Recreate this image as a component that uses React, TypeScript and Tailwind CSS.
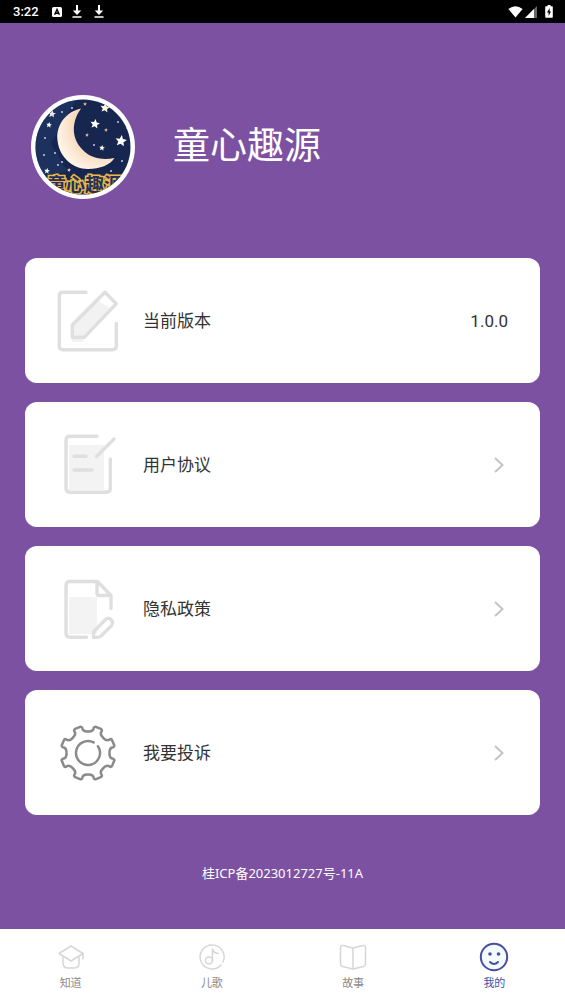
import type { ReactNode } from "react";

const FONT = "font-[Roboto,'Noto_Sans_CJK_SC',sans-serif]";

function StatusBar() {
  return (
    <header className="flex h-[23px] items-center justify-between bg-black pl-[13px] pr-3 text-white">
      <div className="flex items-center gap-2">
        <span className="w-[31px] text-[13px] leading-4 font-medium">3:22</span>
        <svg className="h-[10px] w-[10px]" viewBox="0 0 10 10">
          <rect width="10" height="10" rx="1.5" fill="#fff" />
          <path d="M2.6 7.8L5 2.4L7.4 7.8M3.6 6.2H6.4" fill="none" stroke="#000" strokeWidth="1.4" />
        </svg>
        <DownloadIcon />
        <DownloadIcon />
      </div>
      <div className="flex items-center gap-[2px]">
        <svg className="h-3 w-[15px]" viewBox="0 0 15 12" fill="#fff">
          <path d="M7.5 11.5L.4 3Q7.5-2.4 14.6 3z" />
        </svg>
        <svg className="h-3 w-3" viewBox="0 0 12 12">
          <path d="M12 0V12H0z" fill="#666" />
          <path d="M9 3V12H0z" fill="#fff" />
        </svg>
        <svg className="ml-[6px] h-[13px] w-2" viewBox="0 0 8 13">
          <path d="M2.5 0h3v1.2H7a.8.8 0 0 1 .8.8v10a.8.8 0 0 1-.8.8H1a.8.8 0 0 1-.8-.8V2A.8.8 0 0 1 1 1.2h1.5z" fill="#fff" />
          <path d="M4.6 3L2 7.5h1.6V11L6 6.5H4.6z" fill="#000" />
        </svg>
      </div>
    </header>
  );
}

function DownloadIcon() {
  return (
    <svg className="mx-[2px] h-[13px] w-[10px]" viewBox="0 0 9 13">
      <path d="M3.5 0h2v5.500h3.200L4.500 10L.3 5.500h3.200z" fill="#fff" />
      <path d="M0 12h9" stroke="#fff" strokeWidth="1.500" />
    </svg>
  );
}

const STARS = [
  { x: 64, y: 29, r: 5, fill: "#fff" },
  { x: 90, y: 46, r: 6, fill: "#fff" },
  { x: 74, y: 13, r: 5, fill: "#fff6e0" },
  { x: 71, y: 53, r: 3, fill: "#fff" },
  { x: 18, y: 30, r: 3, fill: "#fff" },
  { x: 56, y: 40, r: 2, fill: "#d9b68c" },
  { x: 75, y: 35, r: 2, fill: "#d9b68c" },
  { x: 54, y: 9, r: 2, fill: "#d9b68c" },
  { x: 21, y: 19, r: 4, fill: "#e8e4ea" },
  { x: 16, y: 76, r: 3, fill: "#fff" },
  { x: 38, y: 75, r: 2, fill: "#e8d3b5" },
];

const DOTS = [[31, 17], [14, 43], [24, 58], [13, 60], [63, 50], [87, 27], [91, 66], [31, 67], [41, 13], [96, 33], [27, 70], [80, 76]];

function Logo() {
  return (
    <svg className="h-[104px] w-[104px] shrink-0" viewBox="0 0 104 104" role="img" aria-label="童心趣源">
      <defs>
        <clipPath id="logo-clip">
          <circle cx="52" cy="52" r="47.5" />
        </clipPath>
        <radialGradient id="moon" cx="0.75" cy="0.3" r="0.75">
          <stop offset="0.5" stopColor="#f5d3ae" />
          <stop offset="0.8" stopColor="#fbe6d2" />
          <stop offset="1" stopColor="#fff3e6" />
        </radialGradient>
      </defs>
      <circle cx="52" cy="52" r="52" fill="#fff" />
      <g clipPath="url(#logo-clip)">
        <rect width="104" height="104" fill="#17264f" />
        <path d="M0 0H48L20 48L36 76L0 88z" fill="#22396a" opacity="0.6" />
        {DOTS.map(([x, y]) => (
          <circle key={`${x}-${y}`} cx={x} cy={y} r="1" fill="#c9cbe0" />
        ))}
        {STARS.map((s) => (
          <path
            key={`${s.x}-${s.y}`}
            transform={`translate(${s.x} ${s.y}) rotate(8) scale(${s.r})`}
            d="M0-1L.28-.36L.95-.31L.44.14L.59.81L0 .45L-.59.81L-.44.14L-.95-.31L-.28-.36z"
            fill={s.fill}
          />
        ))}
        <path d="M50 13.500C35 17 26 29 26.300 43C27 61 41 74 57 74C69 74 79 70 83.500 63C73 65 62 64 54 57C41 46 39 29 50 13.500z" fill="url(#moon)" />
        <text
          x="16"
          y="97"
          className="font-['Noto_Sans_CJK_SC',sans-serif] text-[19px] font-bold"
          fill="#27305a"
          stroke="#e9b949"
          strokeWidth="3"
          paintOrder="stroke"
        >
          童心趣源
        </text>
      </g>
    </svg>
  );
}

function VersionIcon() {
  return (
    <>
      <path d="M22 38L45 15L58 23L32 53L31 57H20z" fill="#f2f2f2" stroke="none" />
      <path d="M34 7.300H11Q7.300 7.300 7.300 11V61Q7.300 64.700 11 64.700H60.500Q64.300 64.700 64.300 61V38.500" />
      <path d="M53 7.300L64.300 18.700L32.300 52.300H20.300V40z" />
    </>
  );
}

function AgreementIcon() {
  return (
    <>
      <path d="M17 16H52V61H17z" fill="#f3f3f3" stroke="none" />
      <path d="M45 7.300H18Q14 7.300 14 11.300V59.300Q14 63.300 18 63.300H54.300Q58.300 63.300 58.300 59.300V30" />
      <path d="M44.500 27.500L62 10M22 27.300H34M22 41H40" />
    </>
  );
}

function PrivacyIcon() {
  return (
    <>
      <path d="M17 24H45V61H17z" fill="#f3f3f3" stroke="none" />
      <path d="M34.500 64.300H18Q14 64.300 14 60.300V12.500Q14 8.500 18 8.500H45.500L59 22.500V35.500" />
      <path d="M45 9.500V20.500Q45 22.500 47 22.500H58" />
      <path d="M53.500 46.500Q56 44 59 46.500Q62 49.500 59.500 52.500L49 63Q47.500 64.300 45.500 64.300H41.500V60.500Q41.500 59 42.500 58z" />
    </>
  );
}

// point on a circle around the middle of the 72px icon, 0deg is straight up
function polar(radius: number, deg: number) {
  const a = (deg * Math.PI) / 180;
  return `${(36 + radius * Math.sin(a)).toFixed(2)} ${(36 - radius * Math.cos(a)).toFixed(2)}`;
}

function gearPath() {
  let d = `M${polar(26, -13)}`;
  for (let a = 0; a < 360; a += 45) {
    d += `C${polar(22.5, a - 14)} ${polar(21.5, a - 7)} ${polar(21.5, a)}`;
    d += `C${polar(21.5, a + 7)} ${polar(22.5, a + 14)} ${polar(26, a + 13)}`;
    d += `Q${polar(27.5, a + 14)} ${polar(27.3, a + 17)}`;
    d += `L${polar(27.3, a + 28)}`;
    d += `Q${polar(27.5, a + 31)} ${polar(26, a + 32)}`;
  }
  return `${d}z`;
}

function GearIcon() {
  return (
    <g stroke="#8a8a8a" strokeWidth="2.500">
      <path d={gearPath()} />
      <path d={`M${polar(12, 56)}A12 12 0 1 1 ${polar(12, 28)}`} />
    </g>
  );
}

function CardIcon({ children }: { children: ReactNode }) {
  return (
    <svg
      className="h-[72px] w-[72px] shrink-0"
      viewBox="0 0 72 72"
      fill="none"
      stroke="#dfdfdf"
      strokeWidth="3.400"
      strokeLinecap="round"
      strokeLinejoin="round"
    >
      {children}
    </svg>
  );
}

const LINKS = [
  { label: "用户协议", icon: <AgreementIcon /> },
  { label: "隐私政策", icon: <PrivacyIcon /> },
  { label: "我要投诉", icon: <GearIcon /> },
];

const CARD = "flex h-[125px] w-full items-center rounded-xl bg-white pl-[27px] pr-8 text-[17px] leading-6 text-[#333]";

const TABS = [
  {
    label: "知道",
    icon: (
      <>
        <path d="M3 11.500L15 4L27 11.500L15 19z" />
        <path d="M7 15V21Q7 26 12 26H18Q23 26 23 21V15M27 11.500V17" />
      </>
    ),
  },
  {
    label: "儿歌",
    icon: (
      <>
        <path d="M24 23A12 12 0 1 1 26 20" />
        <circle cx="12" cy="18.500" r="3.500" />
        <path d="M15.500 18.500V7Q16.500 11 21 11.500" />
      </>
    ),
  },
  {
    label: "故事",
    icon: (
      <path d="M15 6L5 3.500Q2.500 3 2.500 5.500V22Q2.500 24 4.500 24.500L15 27L25.500 24.500Q27.500 24 27.500 22V5.500Q27.500 3 25 3.500L15 6V27" />
    ),
  },
  {
    label: "我的",
    active: true,
    icon: (
      <>
        <circle cx="15" cy="15" r="13.200" strokeWidth="2" fill="#f5faff" />
        <circle cx="11" cy="12" r="1.800" fill="currentColor" stroke="none" />
        <circle cx="19.500" cy="12" r="1.800" fill="currentColor" stroke="none" />
        <path d="M11 20Q15 24 19 20" strokeWidth="2" />
      </>
    ),
  },
];

export default function App() {
  return (
    <div className={`flex min-h-screen flex-col bg-[#7d51a2] ${FONT}`}>
      <StatusBar />
      <main className="flex flex-1 flex-col px-[25px]">
        <div className="flex items-center gap-[38px] pt-[72px] pl-[6px]">
          <Logo />
          <h1 className="text-[37px] leading-[48px] text-white">童心趣源</h1>
        </div>
        <div className="mt-[59px] flex flex-col gap-[19px]">
          <div className={CARD}>
            <CardIcon>
              <VersionIcon />
            </CardIcon>
            <span className="ml-[19px]">当前版本</span>
            <span className="ml-auto">1.0.0</span>
          </div>
          {LINKS.map((item) => (
            <button key={item.label} type="button" className={CARD}>
              <CardIcon>{item.icon}</CardIcon>
              <span className="ml-[19px]">{item.label}</span>
              <svg className="mr-1 ml-auto h-4 w-[10px]" viewBox="0 0 10 16" fill="none" stroke="#c4c4c4" strokeWidth="2">
                <path d="M1 1L8.500 8L1 15" />
              </svg>
            </button>
          ))}
        </div>
        <p className="mt-12 pb-[46px] text-center font-['Noto_Sans','Noto_Sans_CJK_SC',sans-serif] text-[13px] leading-5 text-white">
          桂ICP备2023012727号-11A
        </p>
      </main>
      <nav className="flex h-[75px] bg-white">
        {TABS.map((tab) => (
          <button
            key={tab.label}
            type="button"
            className={`flex flex-1 flex-col items-center pt-[13px] text-[11px] leading-4 ${tab.active ? "text-[#454fa3]" : "text-[#8a8a8a]"}`}
          >
            <svg
              className={`mb-1 h-[30px] w-[30px] ${tab.active ? "text-[#454fa3]" : "text-[#d6d6d6]"}`}
              viewBox="0 0 30 30"
              fill="none"
              stroke="currentColor"
              strokeWidth="1.500"
              strokeLinecap="round"
              strokeLinejoin="round"
            >
              {tab.icon}
            </svg>
            {tab.label}
          </button>
        ))}
      </nav>
    </div>
  );
}
